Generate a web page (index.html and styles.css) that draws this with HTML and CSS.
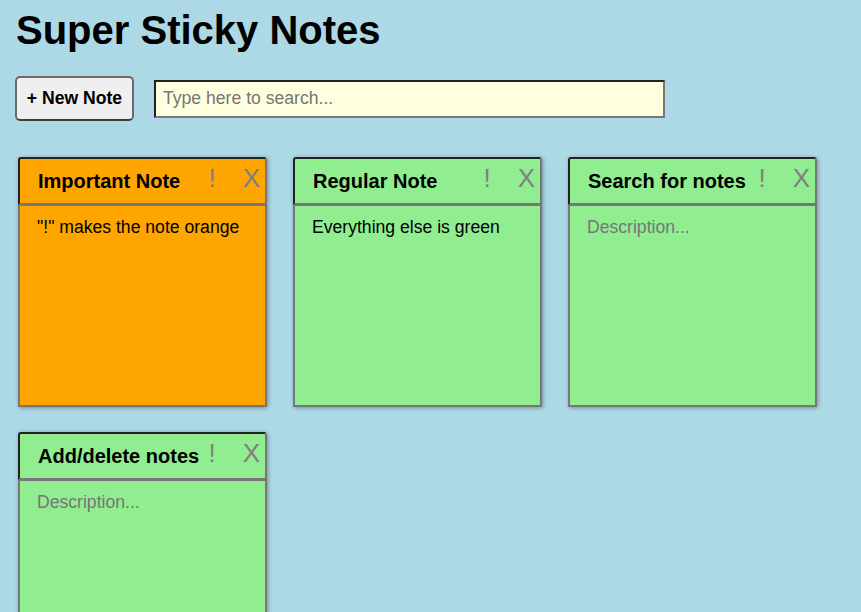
FILE: index.html
```html
<!DOCTYPE html>
<html lang="en">
<head>
<meta charset="utf-8">
<title>Super Sticky Notes</title>
<link rel="stylesheet" href="styles.css">
</head>
<body>
<div class="app">
  <h1 class="app-title">Super Sticky Notes</h1>
  <div class="controls">
    <button class="new-note">+ New Note</button>
    <input class="search" type="text" placeholder="Type here to search...">
  </div>
  <ul class="notes">
    <li class="note note-important">
      <div class="note-head">
        <input class="note-title" type="text" value="Important Note">
        <div class="note-actions"><span class="act act-bang">!</span><span class="act act-x">X</span></div>
      </div>
      <textarea class="note-desc" placeholder="Description...">"!" makes the note orange</textarea>
    </li>
    <li class="note">
      <div class="note-head">
        <input class="note-title" type="text" value="Regular Note">
        <div class="note-actions"><span class="act act-bang">!</span><span class="act act-x">X</span></div>
      </div>
      <textarea class="note-desc" placeholder="Description...">Everything else is green</textarea>
    </li>
    <li class="note">
      <div class="note-head">
        <input class="note-title" type="text" value="Search for notes">
        <div class="note-actions"><span class="act act-bang">!</span><span class="act act-x">X</span></div>
      </div>
      <textarea class="note-desc" placeholder="Description..."></textarea>
    </li>
    <li class="note">
      <div class="note-head">
        <input class="note-title" type="text" value="Add/delete notes">
        <div class="note-actions"><span class="act act-bang">!</span><span class="act act-x">X</span></div>
      </div>
      <textarea class="note-desc" placeholder="Description..."></textarea>
    </li>
  </ul>
</div>
</body>
</html>
```

FILE: styles.css
```css
* { box-sizing: border-box; }
html, body {
  margin: 0;
  padding: 0;
  background: #add8e6;
  font-family: "Liberation Sans", Arial, sans-serif;
  color: #000;
}
.app {
  padding: 0 0 0 15px;
}
.app-title {
  margin: 8px 0 0 1px;
  font-size: 40px;
  line-height: 45px;
  font-weight: bold;
}
.controls {
  display: flex;
  align-items: center;
  gap: 20px;
  margin-top: 23px;
}
.new-note {
  height: 45px;
  width: 119px;
  padding: 0;
  font-family: "Liberation Sans", Arial, sans-serif;
  font-size: 17.6px;
  font-weight: bold;
  color: #000;
  background: #efefef;
  border: 2px solid #6a6a6a;
  border-bottom-color: #3c3c3c;
  border-radius: 5px;
}
.search {
  width: 511px;
  height: 38px;
  padding: 0 7px;
  font-family: "Liberation Sans", Arial, sans-serif;
  font-size: 17.6px;
  background: #ffffe0;
  border: 2px solid;
  border-color: #222 #777 #777 #222;
  outline: none;
}
.search::placeholder { color: #767676; }
.notes {
  list-style: none;
  margin: 36px 0 0 3px;
  padding: 0;
  display: grid;
  grid-template-columns: repeat(3, 249px);
  grid-auto-rows: 250px;
  gap: 25px 26px;
}
.note {
  display: flex;
  flex-direction: column;
  background: #90ee90;
  border-radius: 3px;
  box-shadow: 1px 1px 4px rgba(0, 0, 0, 0.35);
}
.note-important { background: #ffa500; }
.note-head {
  position: relative;
  height: 48px;
}
.note-title {
  width: 100%;
  height: 48px;
  padding: 0 50px 0 18px;
  font-family: "Liberation Sans", Arial, sans-serif;
  font-size: 20px;
  font-weight: bold;
  color: #000;
  background: transparent;
  border: 2px solid;
  border-color: #222 #777 #777 #222;
  border-radius: 3px 3px 0 0;
  outline: none;
}
.note-actions {
  position: absolute;
  top: 6px;
  right: 7px;
  display: flex;
  gap: 27px;
  font-size: 26px;
  line-height: 30px;
  color: #808080;
}
.note-desc {
  flex: 1;
  width: 100%;
  resize: none;
  margin: 0;
  padding: 11px 17px;
  font-family: "Liberation Sans", Arial, sans-serif;
  font-size: 17.6px;
  color: #000;
  background: transparent;
  border: 2px solid #777;
  border-top-width: 1px;
  outline: none;
}
.note-desc::placeholder { color: #767676; }
```
